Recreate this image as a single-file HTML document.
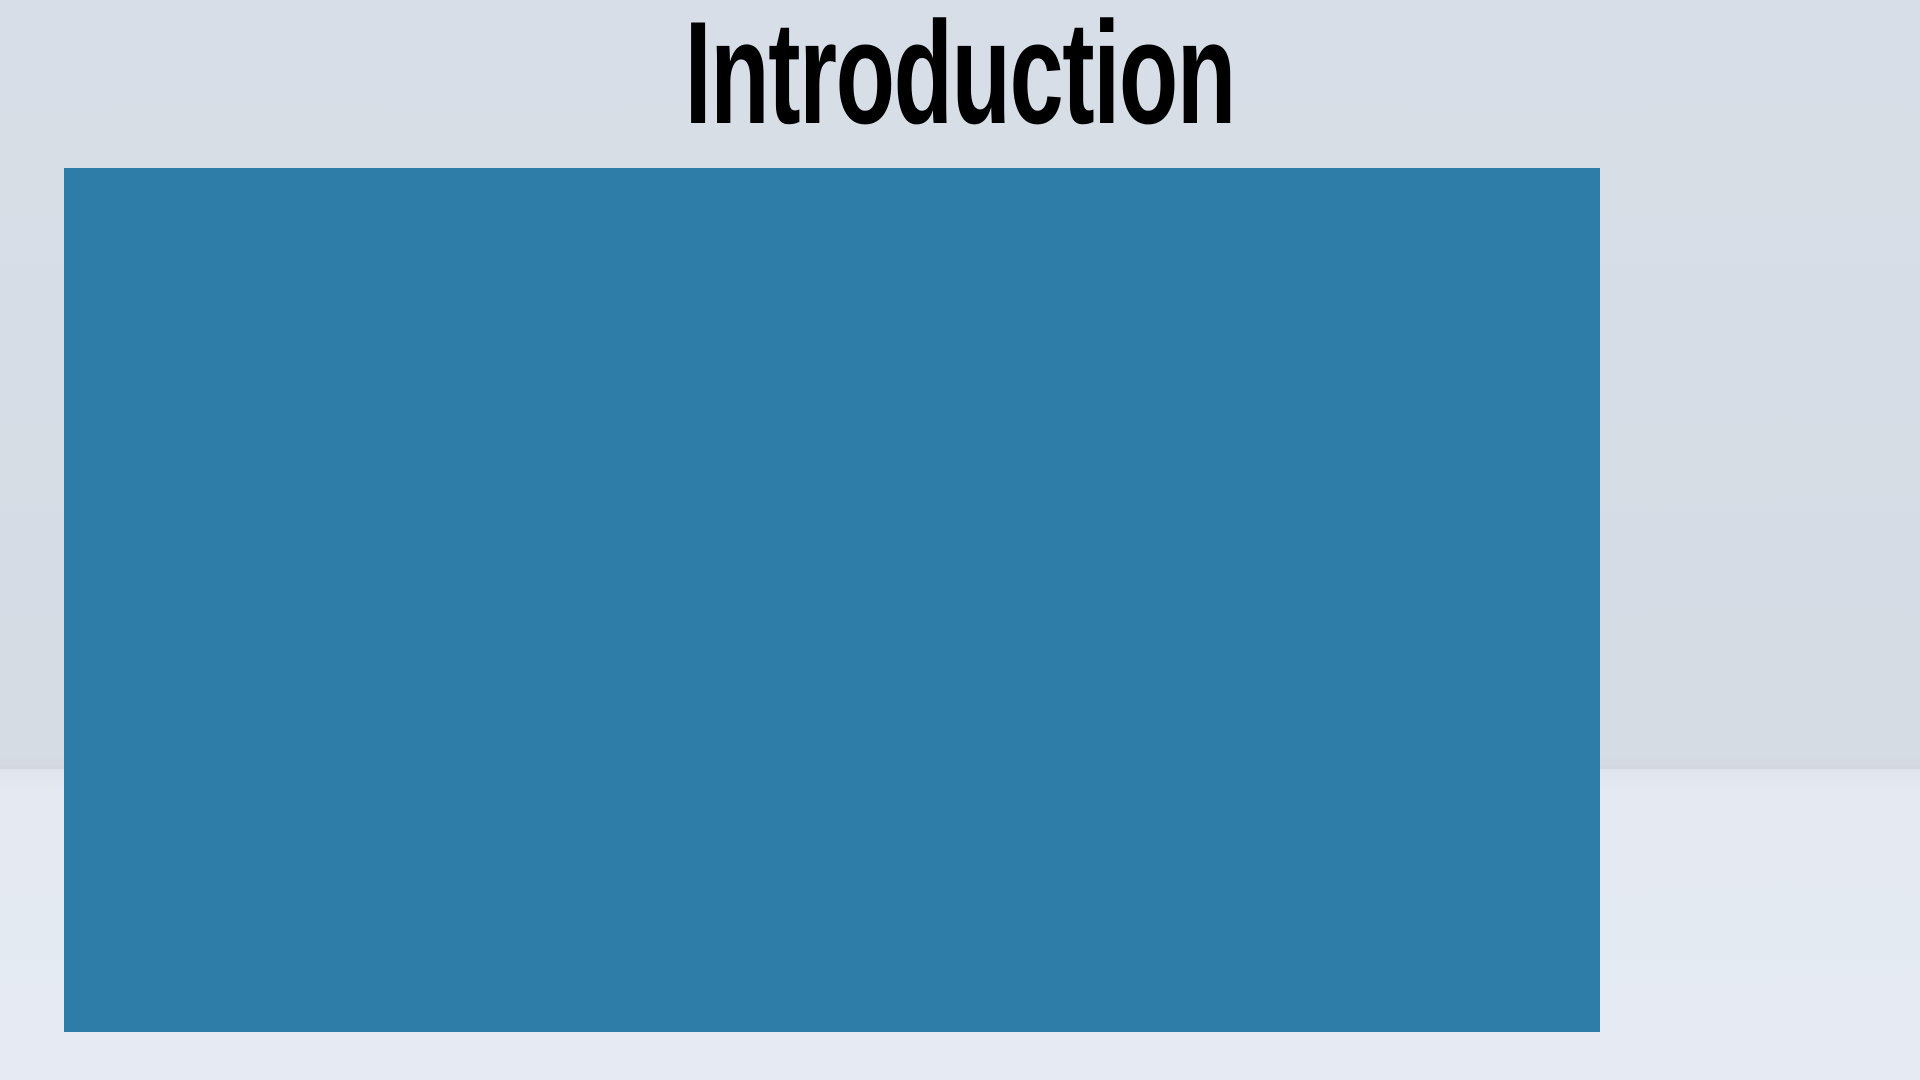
<!DOCTYPE html>
<html><head><meta charset="utf-8"><style>
html,body{margin:0;padding:0;width:1920px;height:1080px;overflow:hidden}
body{position:relative;background:linear-gradient(180deg,#d7dee7 0%,#d6dce4 70%,#d3d8df 71.2%);font-family:"Liberation Sans Narrow","Liberation Sans",sans-serif}
.floor{position:absolute;left:0;top:769px;width:1920px;height:311px;background:linear-gradient(180deg,#dfe4ec 0,#e4e9f2 20px,#e5eaf3 100%)}
.title{position:absolute;left:0;width:1920px;top:0px;text-align:center;line-height:1}
.title span{display:inline-block;font-weight:bold;font-size:146px;letter-spacing:-2px;transform:scaleX(0.665);transform-origin:center top;color:#000}
.box{position:absolute;left:64px;top:168px;width:1536px;height:864px;background:#2e7da8}
</style></head><body>
<div class="floor"></div>
<div class="title"><span>Introduction</span></div>
<div class="box"></div>
</body></html>
